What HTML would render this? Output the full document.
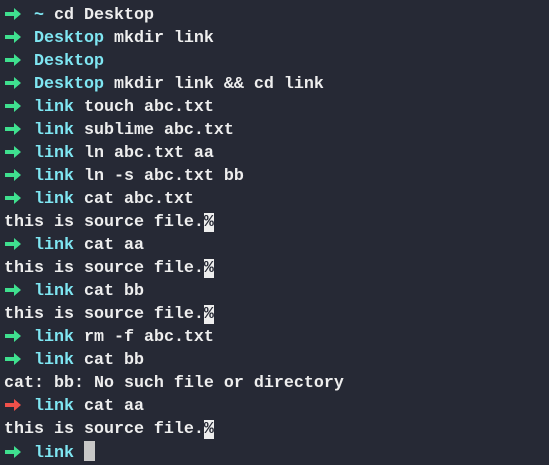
<!DOCTYPE html>
<html><head><style>
body{margin:0;background:#262935;width:549px;height:465px;overflow:hidden}
pre{margin:0;padding:4px 0 0 4px;font-family:"Liberation Mono","DejaVu Sans Mono",monospace;font-size:16.67px;line-height:23px;color:#eeeeee;font-weight:bold}
.a,.r{display:inline-block;width:30px;height:12px;vertical-align:-1px}
.a svg,.r svg{display:block;margin-left:1px}
.a path{fill:#3fe08f}
.r path{fill:#f0504a}
.c{color:#7fe6f2}
.p{background:#eee;color:#262935}
.cur{display:inline-block;width:11px;height:20px;background:#c8c8c8;vertical-align:-4px}
</style></head><body><pre><span class="a"><svg width="16" height="12" viewBox="0 0 16 12"><path d="M0 4h9V0l7 6-7 6V8H0z"/></svg></span><span class="c">~</span> cd Desktop
<span class="a"><svg width="16" height="12" viewBox="0 0 16 12"><path d="M0 4h9V0l7 6-7 6V8H0z"/></svg></span><span class="c">Desktop</span> mkdir link
<span class="a"><svg width="16" height="12" viewBox="0 0 16 12"><path d="M0 4h9V0l7 6-7 6V8H0z"/></svg></span><span class="c">Desktop</span>
<span class="a"><svg width="16" height="12" viewBox="0 0 16 12"><path d="M0 4h9V0l7 6-7 6V8H0z"/></svg></span><span class="c">Desktop</span> mkdir link &amp;&amp; cd link
<span class="a"><svg width="16" height="12" viewBox="0 0 16 12"><path d="M0 4h9V0l7 6-7 6V8H0z"/></svg></span><span class="c">link</span> touch abc.txt
<span class="a"><svg width="16" height="12" viewBox="0 0 16 12"><path d="M0 4h9V0l7 6-7 6V8H0z"/></svg></span><span class="c">link</span> sublime abc.txt
<span class="a"><svg width="16" height="12" viewBox="0 0 16 12"><path d="M0 4h9V0l7 6-7 6V8H0z"/></svg></span><span class="c">link</span> ln abc.txt aa
<span class="a"><svg width="16" height="12" viewBox="0 0 16 12"><path d="M0 4h9V0l7 6-7 6V8H0z"/></svg></span><span class="c">link</span> ln -s abc.txt bb
<span class="a"><svg width="16" height="12" viewBox="0 0 16 12"><path d="M0 4h9V0l7 6-7 6V8H0z"/></svg></span><span class="c">link</span> cat abc.txt
this is source file.<span class="p">%</span>
<span class="a"><svg width="16" height="12" viewBox="0 0 16 12"><path d="M0 4h9V0l7 6-7 6V8H0z"/></svg></span><span class="c">link</span> cat aa
this is source file.<span class="p">%</span>
<span class="a"><svg width="16" height="12" viewBox="0 0 16 12"><path d="M0 4h9V0l7 6-7 6V8H0z"/></svg></span><span class="c">link</span> cat bb
this is source file.<span class="p">%</span>
<span class="a"><svg width="16" height="12" viewBox="0 0 16 12"><path d="M0 4h9V0l7 6-7 6V8H0z"/></svg></span><span class="c">link</span> rm -f abc.txt
<span class="a"><svg width="16" height="12" viewBox="0 0 16 12"><path d="M0 4h9V0l7 6-7 6V8H0z"/></svg></span><span class="c">link</span> cat bb
cat: bb: No such file or directory
<span class="r"><svg width="16" height="12" viewBox="0 0 16 12"><path d="M0 4h9V0l7 6-7 6V8H0z"/></svg></span><span class="c">link</span> cat aa
this is source file.<span class="p">%</span>
<span class="a"><svg width="16" height="12" viewBox="0 0 16 12"><path d="M0 4h9V0l7 6-7 6V8H0z"/></svg></span><span class="c">link</span> <span class="cur"></span></pre></body></html>
